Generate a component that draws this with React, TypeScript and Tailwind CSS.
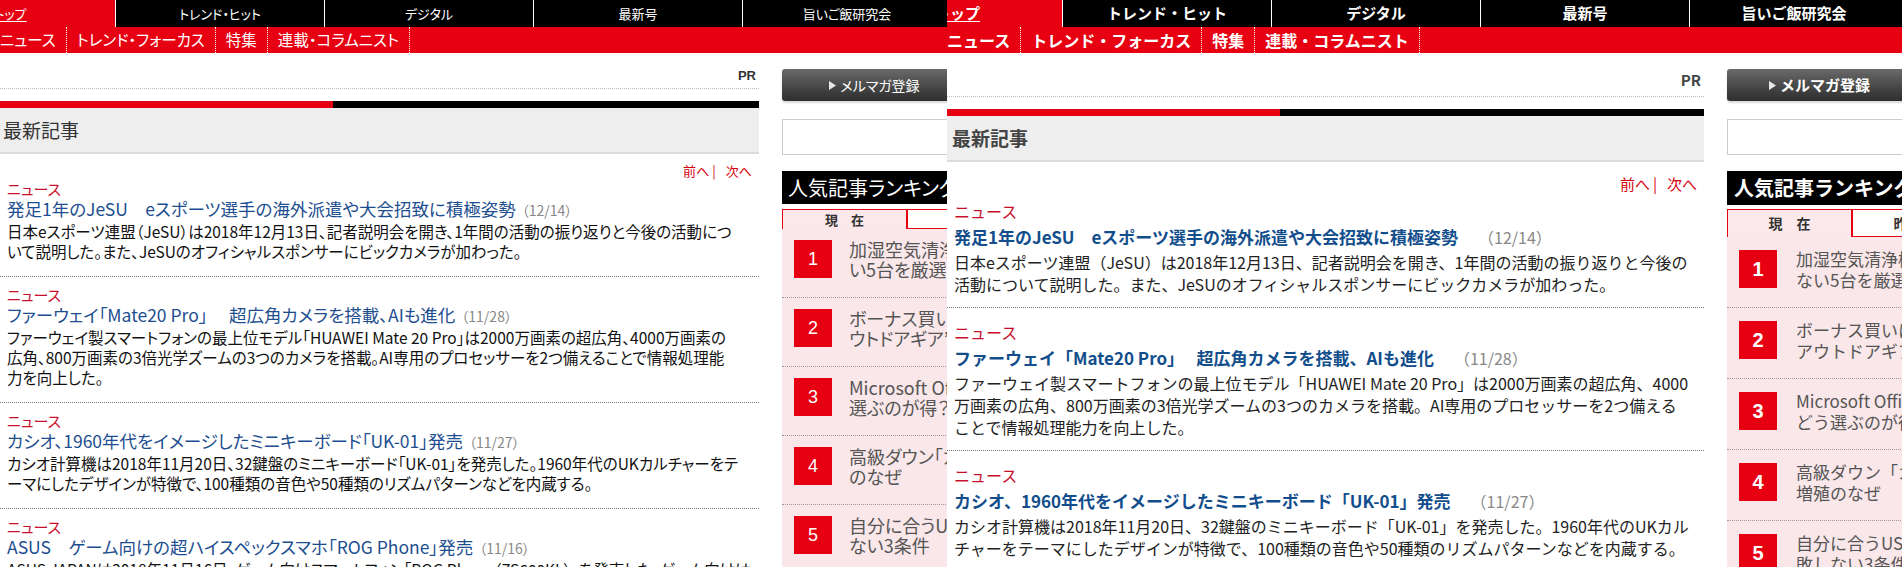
import React from "react";

type V = "L" | "R";

type Article = { title: string; date: string; lines: Record<V, string[]> };

const articles: Article[] = [
  {
    title: "発足1年のJeSU　eスポーツ選手の海外派遣や大会招致に積極姿勢",
    date: "（12/14）",
    lines: {
      L: [
        "日本eスポーツ連盟（JeSU）は2018年12月13日、記者説明会を開き、1年間の活動の振り返りと今後の活動につ",
        "いて説明した。また、JeSUのオフィシャルスポンサーにビックカメラが加わった。",
      ],
      R: [
        "日本eスポーツ連盟（JeSU）は2018年12月13日、記者説明会を開き、1年間の活動の振り返りと今後の",
        "活動について説明した。また、JeSUのオフィシャルスポンサーにビックカメラが加わった。",
      ],
    },
  },
  {
    title: "ファーウェイ「Mate20 Pro」　 超広角カメラを搭載、AIも進化",
    date: "（11/28）",
    lines: {
      L: [
        "ファーウェイ製スマートフォンの最上位モデル「HUAWEI Mate 20 Pro」は2000万画素の超広角、4000万画素の",
        "広角、800万画素の3倍光学ズームの3つのカメラを搭載。AI専用のプロセッサーを2つ備えることで情報処理能",
        "力を向上した。",
      ],
      R: [
        "ファーウェイ製スマートフォンの最上位モデル「HUAWEI Mate 20 Pro」は2000万画素の超広角、4000",
        "万画素の広角、800万画素の3倍光学ズームの3つのカメラを搭載。AI専用のプロセッサーを2つ備える",
        "ことで情報処理能力を向上した。",
      ],
    },
  },
  {
    title: "カシオ、1960年代をイメージしたミニキーボード「UK-01」発売",
    date: "（11/27）",
    lines: {
      L: [
        "カシオ計算機は2018年11月20日、32鍵盤のミニキーボード「UK-01」を発売した。1960年代のUKカルチャーをテ",
        "ーマにしたデザインが特徴で、100種類の音色や50種類のリズムパターンなどを内蔵する。",
      ],
      R: [
        "カシオ計算機は2018年11月20日、32鍵盤のミニキーボード「UK-01」を発売した。1960年代のUKカル",
        "チャーをテーマにしたデザインが特徴で、100種類の音色や50種類のリズムパターンなどを内蔵する。",
      ],
    },
  },
  {
    title: "ASUS　ゲーム向けの超ハイスペックスマホ「ROG Phone」発売",
    date: "（11/16）",
    lines: {
      L: [
        "ASUS JAPANは2018年11月16日、ゲーム向けスマートフォン「ROG Phone（ZS600KL）」を発売した。ゲーム向けは",
        "冷却機構や専用アクセサリーを用意し、長時間のプレイでも性能を維持できるという。",
      ],
      R: [
        "ASUS JAPANは2018年11月16日、ゲーム向けスマートフォン「ROG Phone（ZS600KL）」を発売",
        "した。冷却機構や専用アクセサリーを用意し、長時間のプレイでも性能を維持できるという。",
      ],
    },
  },
];

const ranking: Record<V, string[][]> = {
  L: [
    ["加湿空気清浄機 買って損しな", "い5台を厳選"],
    ["ボーナス買いにも最適な“ア", "ウトドアギア”"],
    ["Microsoft Office 2019はどう", "選ぶのが得？"],
    ["高級ダウン「カナダグース」増殖", "のなぜ"],
    ["自分に合うUSBメモリー 失敗し", "ない3条件"],
  ],
  R: [
    ["加湿空気清浄機 買って損し", "ない5台を厳選"],
    ["ボーナス買いにも最適な“", "アウトドアギア”"],
    ["Microsoft Office 2019は", "どう選ぶのが得？"],
    ["高級ダウン「カナダグース」", "増殖のなぜ"],
    ["自分に合うUSBメモリー 失", "敗しない3条件"],
  ],
};

const S = {
  L: {
    panel: "w-[947px] shrink-0",
    font: "font-['Noto_Sans_CJK_JP',sans-serif] [font-feature-settings:'palt']",
    navText: "text-[13px] font-normal",
    subText: "text-[15.5px] font-normal",
    prRow: "h-[36px] pb-[5px]",
    prText: "text-[13px] leading-[14px] font-bold text-[#333] font-['Liberation_Sans',sans-serif]",
    main: "w-[759px]",
    headText: "text-[19px] text-[#333] pl-[3px]",
    pag: "mt-[9px] leading-[16px] text-[13px]",
    cat: "text-[15px] leading-[18px]",
    title: "text-[17.5px] leading-[22px] font-normal text-[#1d4e8f]",
    date: "ml-[6px] text-[14px] text-[#888]",
    desc: "text-[15.5px] leading-[20px] text-[#111]",
    article: "pt-[9px] pb-[15px] first:pt-[1px]",
    btnText: "text-[14px] font-normal",
    rankHead: "h-[33px] text-[20px] font-normal pl-[6px]",
    tabs: "mt-[5px] h-[20px] text-[13px] font-bold",
    rankItem: "pt-[10px] pb-[18px]",
    num: "text-[18px] font-normal",
    rankText: "text-[18px] leading-[20px] ml-[17px]",
  },
  R: {
    panel: "flex-1 min-w-0",
    font: "font-['Noto_Sans_CJK_JP',sans-serif]",
    navText: "text-[15px] font-bold",
    subText: "text-[16px] font-bold",
    prRow: "h-[44px] pb-[8px]",
    prText: "text-[15px] leading-[16px] font-bold text-[#444]",
    main: "w-[757px]",
    headText: "text-[19px] font-bold text-[#444] pl-[5px]",
    pag: "mt-[12px] leading-[20px] text-[15px]",
    cat: "text-[16px] leading-[24px]",
    title: "text-[17px] leading-[28px] font-bold text-[#134e8c]",
    date: "ml-[20px] text-[16px] text-[#888]",
    desc: "text-[16px] leading-[22px] text-[#222]",
    article: "pt-[12px] pb-[12px] first:pt-[5px]",
    btnText: "text-[15px] font-bold",
    rankHead: "h-[34px] text-[20px] font-bold pl-[7px]",
    tabs: "mt-[4px] h-[28px] text-[14px] font-bold",
    rankItem: "pt-[11px] pb-[17px]",
    num: "text-[20px] font-bold",
    rankText: "text-[17px] leading-[21px] ml-[19px]",
  },
};

const navItems = ["トップ", "トレンド・ヒット", "デジタル", "最新号", "旨いご飯研究会"];
const subItems = ["ニュース", "トレンド・フォーカス", "特集", "連載・コラムニスト"];

function Panel({ v }: { v: V }) {
  const s = S[v];
  return (
    <div className={`${s.panel} ${s.font} h-[567px] overflow-hidden bg-white relative`}>
      {/* top nav */}
      <div className="h-[27px] bg-black overflow-hidden">
        <div className="flex -ml-[94px] h-full whitespace-nowrap">
          {navItems.map((n, i) => (
            <div
              key={n}
              className={`w-[209px] shrink-0 h-full flex items-center justify-center text-white ${s.navText} ${
                i === 0 ? "bg-[#e60012]" : "border-l border-white"
              }`}
            >
              <span className={i === 0 ? "underline underline-offset-2" : ""}>{n}</span>
            </div>
          ))}
        </div>
      </div>
      {/* sub nav */}
      <div className="h-[26px] bg-[#e60012] overflow-hidden">
        <div className="flex -ml-[10px] h-full whitespace-nowrap">
          {subItems.map((n) => (
            <div
              key={n}
              className={`px-[10px] h-full flex items-center text-white border-r border-dotted border-white ${s.subText}`}
            >
              {n}
            </div>
          ))}
        </div>
      </div>
      {/* body */}
      <div className="flex">
        <div className={`${s.main} shrink-0`}>
          <div className={`flex items-end justify-end pr-[3px] border-b border-dotted border-[#bbb] ${s.prRow}`}>
            <span className={s.prText}>PR</span>
          </div>
          <div className="mt-[12px] flex h-[7px]">
            <div className="w-[333px] bg-[#e60012]" />
            <div className="flex-1 bg-black" />
          </div>
          <div className="h-[46px] bg-[#eeeeee] border-b-2 border-[#dcdcdc] flex items-center">
            <span className={s.headText}>最新記事</span>
          </div>
          <div className={`flex justify-end pr-[7px] text-[#d7000f] ${s.pag}`}>
            <span>前へ</span>
            <span className="ml-[3px]">|</span>
            <span className="ml-[10px]">次へ</span>
          </div>
          <div>
            {articles.map((a, i) => (
              <div key={i} className={`px-[7px] border-b border-dotted border-[#777] ${s.article}`}>
                <div className={`text-[#c8102e] ${s.cat}`}>ニュース</div>
                <div className={`whitespace-nowrap ${s.title}`}>
                  {a.title}
                  <span className={`font-normal ${s.date}`}>{a.date}</span>
                </div>
                <p className={s.desc}>
                  {a.lines[v].map((ln, j) => (
                    <span key={j} className="block whitespace-nowrap">
                      {ln}
                    </span>
                  ))}
                </p>
              </div>
            ))}
          </div>
        </div>
        {/* sidebar */}
        <div className="ml-[23px] w-[300px] shrink-0">
          <div className="mt-[16px] w-[185px] h-[32px] rounded-[3px] bg-linear-to-b from-[#6a6a6a] to-[#2e2e2e] shadow-[0_2px_2px_rgba(0,0,0,0.15)] flex items-center justify-center text-white">
            <svg width="7" height="9" viewBox="0 0 7 9" className="mr-[4px]">
              <path d="M0 0 L7 4.5 L0 9 Z" fill="#e8e8e8" />
            </svg>
            <span className={s.btnText}>メルマガ登録</span>
          </div>
          <div className="mt-[18px] h-[36px] border border-[#cccccc] bg-white" />
          <div className={`mt-[16px] bg-black text-white flex items-center whitespace-nowrap ${s.rankHead}`}>
            人気記事ランキング
          </div>
          <div className={`flex ${s.tabs}`}>
            <div className="w-[125px] border-t border-l border-r border-[#e60012] bg-[#fbe8ea] flex items-center justify-center text-[#333]">
              現　在
            </div>
            <div className="w-[125px] border border-[#e60012] bg-white flex items-center justify-center text-[#333]">
              昨　日
            </div>
          </div>
          <div className="bg-[#f9e7e9]">
            {ranking[v].map((lines, i) => (
              <div key={i} className={`flex items-center pl-[12px] border-b border-dotted border-[#999] ${s.rankItem}`}>
                <div className={`w-[38px] h-[38px] shrink-0 bg-[#e60012] text-white flex items-center justify-center font-['Liberation_Sans',sans-serif] ${s.num}`}>
                  {i + 1}
                </div>
                <div className={`text-[#555] whitespace-nowrap ${s.rankText}`}>
                  <div>{lines[0]}</div>
                  <div>{lines[1]}</div>
                </div>
              </div>
            ))}
          </div>
        </div>
      </div>
    </div>
  );
}

export default function App() {
  return (
    <div className="flex w-[1902px] h-[567px] overflow-hidden bg-white">
      <Panel v="L" />
      <Panel v="R" />
    </div>
  );
}
